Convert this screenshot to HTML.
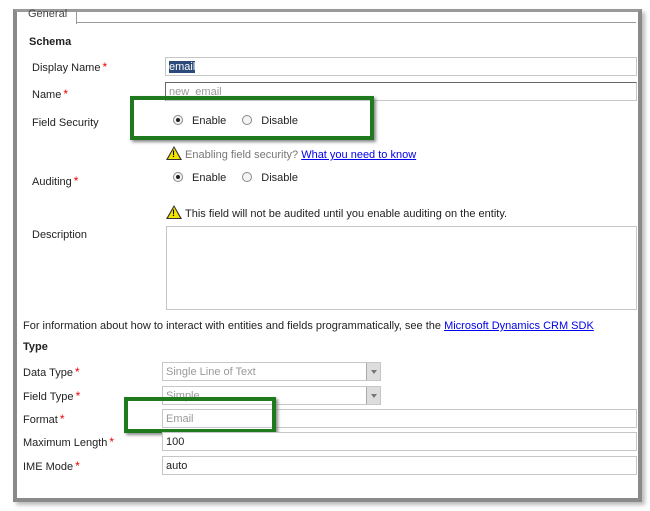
<!DOCTYPE html>
<html><head><style>
*{margin:0;padding:0;box-sizing:border-box}
body{width:650px;height:511px;background:#fff;position:relative;overflow:hidden;font-family:"Liberation Sans",sans-serif;font-size:11px;color:#222}
.a{position:absolute;white-space:nowrap}
.frame{position:absolute;left:13px;top:9px;width:629px;height:493px;border:4px solid #8a8a8a;border-top:3px solid #9a9a9a;box-shadow:3px 3px 4px #bbb}
.inp{position:absolute;border:1px solid #c6c6c6;background:#fff;height:19px;padding-left:3px;line-height:19px}
.r{color:#e00;font-size:12px;margin-left:2px}
.g{position:absolute;border:4px solid #1f7a1f;box-shadow:2px 2px 3px #888}
.rad{display:inline-block;width:10px;height:10px;border:1px solid #888;border-radius:50%;vertical-align:-1px;margin-right:9px;position:relative;background:#f4f4f4}
.rad.on:after{content:"";position:absolute;left:2px;top:2px;width:4px;height:4px;border-radius:50%;background:#222}
.warn{display:inline-block;width:0;height:0;border-left:8px solid transparent;border-right:8px solid transparent;border-bottom:14px solid #333;position:relative;vertical-align:-2px;margin-right:3px}
.warn:after{content:"!";position:absolute;left:-2px;top:3px;font-size:9px;font-weight:bold;color:#000}
.warn:before{content:"";position:absolute;left:-6px;top:2px;border-left:6px solid transparent;border-right:6px solid transparent;border-bottom:11px solid #f5e400}
a{color:#00e;text-decoration:underline}
.sel{position:absolute;border:1px solid #c6c6c6;height:19px;color:#999;padding-left:3px;line-height:19px}
.sel b{position:absolute;right:0;top:0;width:14px;height:17px;background:#ddd;border-left:1px solid #aaa}
.sel b:after{content:"";position:absolute;left:4px;top:7px;border-left:3px solid transparent;border-right:3px solid transparent;border-top:4px solid #777}
</style></head><body>
<div class="frame"></div>
<div class="a" style="left:76px;top:22px;width:560px;border-top:1px solid #999"></div>
<div class="a" style="left:20px;top:12px;width:57px;height:12px;border-right:1px solid #999;color:#444;padding-left:8px;line-height:4px">General</div>
<div class="a" style="left:29px;top:36px;font-weight:bold">Schema</div>
<div class="a" style="left:32px;top:60px">Display Name<span class="r">*</span></div>
<div class="inp" style="left:165px;top:57px;width:472px"><span style="background:#2a4a7a;color:#fff">email</span></div>
<div class="a" style="left:32px;top:87px">Name<span class="r">*</span></div>
<div class="inp" style="left:165px;top:82px;width:472px;border-top:1px solid #666;border-left:1px solid #666;color:#999">new_email</div>
<div class="a" style="left:32px;top:117px">Field Security</div>
<div class="a" style="left:173px;top:115px"><span class="rad on"></span>Enable<span style="display:inline-block;width:16px"></span><span class="rad"></span>Disable</div>
<div class="g" style="left:130px;top:96px;width:244px;height:44px"></div>
<div class="a" style="left:166px;top:146px;color:#777"><span class="warn"></span>Enabling field security? <a>What you need to know</a></div>
<div class="a" style="left:32px;top:174px">Auditing<span class="r">*</span></div>
<div class="a" style="left:173px;top:172px"><span class="rad on"></span>Enable<span style="display:inline-block;width:16px"></span><span class="rad"></span>Disable</div>
<div class="a" style="left:166px;top:205px"><span class="warn"></span>This field will not be audited until you enable auditing on the entity.</div>
<div class="a" style="left:32px;top:229px">Description</div>
<div class="inp" style="left:166px;top:226px;width:471px;height:84px"></div>
<div class="a" style="left:23px;top:320px">For information about how to interact with entities and fields programmatically, see the <a>Microsoft Dynamics CRM SDK</a></div>
<div class="a" style="left:23px;top:341px;font-weight:bold">Type</div>
<div class="a" style="left:23px;top:365px">Data Type<span class="r">*</span></div>
<div class="sel" style="left:162px;top:362px;width:219px">Single Line of Text<b></b></div>
<div class="a" style="left:23px;top:389px">Field Type<span class="r">*</span></div>
<div class="sel" style="left:162px;top:386px;width:219px">Simple<b></b></div>
<div class="a" style="left:23px;top:412px">Format<span class="r">*</span></div>
<div class="inp" style="left:162px;top:409px;width:475px;color:#999">Email</div>
<div class="g" style="left:124px;top:397px;width:152px;height:36px"></div>
<div class="a" style="left:23px;top:435px">Maximum Length<span class="r">*</span></div>
<div class="inp" style="left:162px;top:432px;width:475px">100</div>
<div class="a" style="left:23px;top:459px">IME Mode<span class="r">*</span></div>
<div class="inp" style="left:162px;top:456px;width:475px">auto</div>
</body></html>
